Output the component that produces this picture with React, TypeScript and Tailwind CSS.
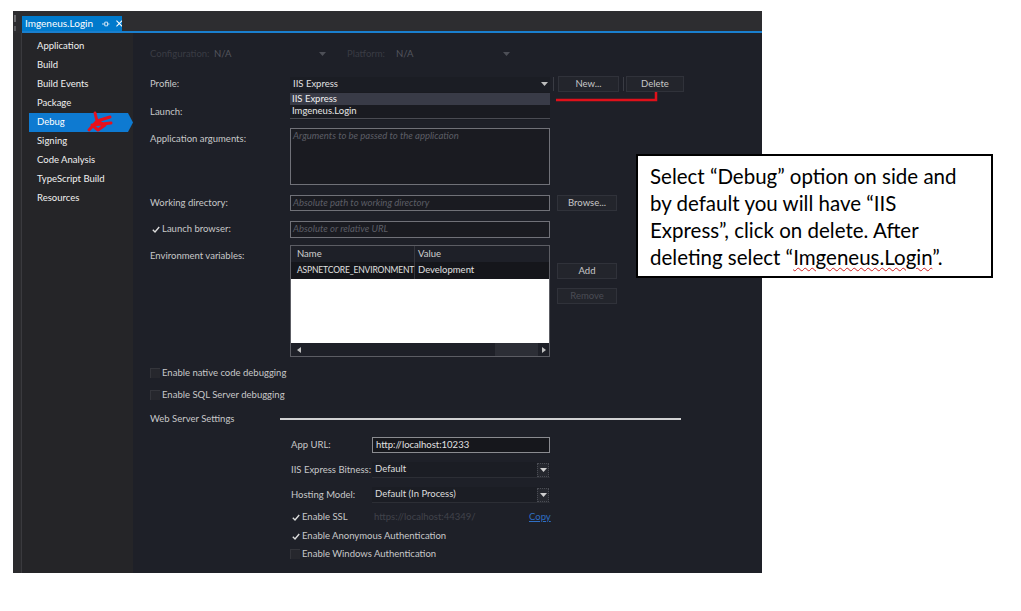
import React from "react";

const Arrow = ({ c = "#c8c8c8" }: { c?: string }) => (
  <svg width="7" height="4" viewBox="0 0 7 4">
    <path d="M0 0h7L3.5 4z" fill={c} />
  </svg>
);

const Check = () => (
  <svg width="8" height="7" viewBox="0 0 8 7">
    <path d="M0.8 3.8 3 5.9 7.2 1" stroke="#dcdcdc" strokeWidth="1.4" fill="none" />
  </svg>
);

const Box = () => <div className="w-[10px] h-[10px] bg-[#26272d] border-l border-t border-[#34353b]" />;

const SideItem = ({ label, selected }: { label: string; selected?: boolean }) =>
  selected ? (
    <div className="flex h-[19px] items-center ml-[7px]">
      <div className="w-[99px] h-[19px] bg-[#0e7ad1] flex items-center pl-[8px] text-white">{label}</div>
      <svg width="5" height="19" viewBox="0 0 5 19">
        <path d="M0 0L5 9.5L0 19z" fill="#0e7ad1" />
      </svg>
    </div>
  ) : (
    <div className="h-[19px] flex items-center pl-[15px] text-[#f1f1f1]">{label}</div>
  );

const Input = ({ text, placeholder, w = "w-[260px]", h = "h-[16px]" }: { text?: string; placeholder?: string; w?: string; h?: string }) => (
  <div className={`${w} ${h} bg-[#1a1b21] border border-[#707178] flex items-start pl-[2px] pt-[1px]`}>
    {text ? (
      <span className="text-[#e2e2e2] leading-[12px]">{text}</span>
    ) : (
      <span className="text-[#5c5e66] italic leading-[12px]">{placeholder}</span>
    )}
  </div>
);

const Btn = ({ label, dim, w = "w-[60px]" }: { label: string; dim?: boolean; w?: string }) => (
  <div className={`${w} h-[16px] bg-[#23252c] border border-[#30323a] flex items-center justify-center ${dim ? "text-[#4a4c54]" : "text-[#c8c8c8]"}`}>
    {label}
  </div>
);

const Combo = ({ text }: { text: string }) => (
  <div className="w-[178px] h-[16px] bg-[#1b1d24] border-b border-[#2c2e35] flex items-center justify-between pl-[3px] pr-[1px]">
    <span className="text-[#dedede]">{text}</span>
    <div className="w-[12px] h-[14px] border border-dotted border-[#4a4c54] bg-[#25272e] flex items-center justify-center">
      <Arrow c="#d0d0d0" />
    </div>
  </div>
);

export default function App() {
  return (
    <div className="w-[1021px] h-[611px] bg-white relative overflow-hidden pt-[11px] pl-[13px] font-['Lato',sans-serif] text-[9.5px]">
      <div className="w-[749px] h-[562px] flex flex-col bg-[#2d2d30]">
        {/* tab strip */}
        <div className="h-[20px] flex shrink-0">
          <div className="w-[9px] relative">
            <div className="absolute left-[1px] top-[4px] w-[2px] h-[7px] bg-[#6a6a6e]" />
            <div className="absolute left-[1px] top-[15px] w-[2px] h-[5px] bg-[#5a5a5e]" />
          </div>
          <div className="mt-[5px] w-[100px] h-[15px] bg-[#007acc] flex items-center pl-[3px] text-white text-[10px]">
            <span>Imgeneus.Login</span>
            <svg className="ml-[9px]" width="8" height="6" viewBox="0 0 8 6">
              <path d="M0 3h3M3 1h3v4H3zM6 3h2" stroke="#dbeaf7" strokeWidth="1" fill="none" />
            </svg>
            <svg className="ml-[6px]" width="7" height="7" viewBox="0 0 7 7">
              <path d="M0.5 0.5l6 6M6.5 0.5l-6 6" stroke="#fff" strokeWidth="1.1" />
            </svg>
          </div>
        </div>
        <div className="h-[2px] ml-[9px] bg-[#1a7fce] shrink-0" />
        {/* body */}
        <div className="flex-1 flex">
          <div className="w-[9px] bg-[#2b2b2e] border-r border-[#3a3a3e]" />
          {/* sidebar */}
          <div className="w-[111px] bg-[#252528] pt-[4px] flex flex-col">
            <SideItem label="Application" />
            <SideItem label="Build" />
            <SideItem label="Build Events" />
            <SideItem label="Package" />
            <SideItem label="Debug" selected />
            <SideItem label="Signing" />
            <SideItem label="Code Analysis" />
            <SideItem label="TypeScript Build" />
            <SideItem label="Resources" />
          </div>
          {/* main */}
          <div className="flex-1 bg-[#1e2028] pl-[17px] flex flex-col text-[#c8c8c8]">
            {/* config row */}
            <div className="flex items-center h-[16px] mt-[13px]">
              <div className="w-[64px] text-[#3a3c44]">Configuration:</div>
              <div className="w-[112px] flex items-center justify-between text-[#53555d]">
                <span>N/A</span>
                <Arrow c="#4d4f57" />
              </div>
              <div className="ml-[21px] w-[49px] text-[#3a3c44]">Platform:</div>
              <div className="w-[114px] flex items-center justify-between text-[#53555d]">
                <span>N/A</span>
                <Arrow c="#4d4f57" />
              </div>
            </div>
            {/* profile */}
            <div className="flex items-center h-[16px] mt-[14px]">
              <div className="w-[140px]">Profile:</div>
              <div className="w-[260px] h-[15px] bg-[#1b1d24] flex items-center justify-between pl-[3px] pr-[2px] relative">
                <span className="text-[#e0e0e0]">IIS Express</span>
                <Arrow c="#bdbdbd" />
                <div className="absolute left-0 top-[15px] w-[260px] h-[27px] bg-[#1a1b21] border-b border-[#4a4b52] z-10 flex flex-col pt-[1px]">
                  <div className="h-[12px] bg-[#393b47] flex items-center pl-[2px] pt-[1px] text-[#f0f0f0]">IIS Express</div>
                  <div className="h-[12px] flex items-center pl-[2px] pt-[1px] text-[#e6e6e6]">Imgeneus.Login</div>
                </div>
              </div>
              <div className="ml-[3px] w-px h-[14px] bg-[#3a3c44]" />
              <div className="ml-[4px]"><Btn label="New..." w="w-[61px]" /></div>
              <div className="ml-[4px] w-px h-[14px] bg-[#3a3c44]" />
              <div className="ml-[2px]"><Btn label="Delete" w="w-[58px]" /></div>
            </div>
            {/* launch */}
            <div className="flex items-center h-[16px] mt-[12px]">
              <div className="w-[140px]">Launch:</div>
              <div className="w-[260px] h-[15px] bg-[#1b1d24]" />
            </div>
            {/* app args */}
            <div className="flex items-start h-[57px] mt-[8px]">
              <div className="w-[140px] pt-[4px]">Application arguments:</div>
              <Input placeholder="Arguments to be passed to the application" h="h-[57px]" />
            </div>
            {/* working dir */}
            <div className="flex items-center h-[16px] mt-[10px]">
              <div className="w-[140px]">Working directory:</div>
              <Input placeholder="Absolute path to working directory" />
              <div className="ml-[7px]"><Btn label="Browse..." /></div>
            </div>
            {/* launch browser */}
            <div className="flex items-center h-[17px] mt-[10px]">
              <div className="w-[140px] flex items-center pl-[2px]">
                <Check />
                <span className="ml-[2px]">Launch browser:</span>
              </div>
              <Input placeholder="Absolute or relative URL" h="h-[17px]" />
            </div>
            {/* env vars */}
            <div className="flex items-start h-[112px] mt-[7px]">
              <div className="w-[140px] pt-[4px]">Environment variables:</div>
              <div className="w-[260px] h-[112px] border border-[#5c5d64] flex flex-col bg-white">
                <div className="h-[16px] bg-[#1e2028] flex items-center">
                  <div className="w-[124px] pl-[6px] text-[#d0d0d0] h-full flex items-center border-r border-[#34363e]">Name</div>
                  <div className="pl-[3px] text-[#d0d0d0]">Value</div>
                </div>
                <div className="h-[17px] bg-[#15161b] flex items-center">
                  <div className="w-[124px] pl-[6px] text-[#e0e0e0] h-full flex items-center border-r border-[#34363e] whitespace-nowrap text-[8.5px] tracking-[-0.15px]">ASPNETCORE_ENVIRONMENT</div>
                  <div className="pl-[3px] text-[#e0e0e0]">Development</div>
                </div>
                <div className="flex-1 bg-white" />
                <div className="h-[13px] bg-[#1e2028] flex items-center pl-[6px] pr-[3px]">
                  <svg width="4" height="6" viewBox="0 0 4 6"><path d="M4 0v6L0 3z" fill="#c0c0c0" /></svg>
                  <div className="flex-1" />
                  <div className="w-[43px] h-[13px] bg-[#2c2e36]" />
                  <svg className="ml-[4px]" width="4" height="6" viewBox="0 0 4 6"><path d="M0 0v6L4 3z" fill="#c0c0c0" /></svg>
                </div>
              </div>
              <div className="ml-[7px] pt-[18px] flex flex-col gap-[9px]">
                <Btn label="Add" />
                <Btn label="Remove" dim />
              </div>
            </div>
            {/* native */}
            <div className="flex items-center h-[16px] mt-[8px]">
              <Box />
              <span className="ml-[2px]">Enable native code debugging</span>
            </div>
            <div className="flex items-center h-[16px] mt-[6px]">
              <Box />
              <span className="ml-[2px]">Enable SQL Server debugging</span>
            </div>
            {/* web server */}
            <div className="flex items-center h-[16px] mt-[8px]">
              <div className="w-[130px]">Web Server Settings</div>
              <div className="w-[401px] h-[2px] bg-[#d2d2d4]" />
            </div>
            <div className="flex items-center h-[16px] mt-[10px] ml-[141px]">
              <div className="w-[81px]">App URL:</div>
              <div className="w-[178px] h-[16px] bg-[#16171c] border border-[#8a8b90] flex items-center pl-[3px] text-[#e2e2e2]">http://localhost:10233</div>
            </div>
            <div className="flex items-center h-[16px] mt-[9px] ml-[141px]">
              <div className="w-[81px]">IIS Express Bitness:</div>
              <Combo text="Default" />
            </div>
            <div className="flex items-center h-[16px] mt-[9px] ml-[141px]">
              <div className="w-[81px]">Hosting Model:</div>
              <Combo text="Default (In Process)" />
            </div>
            <div className="flex items-center h-[16px] mt-[6px] ml-[142px]">
              <div className="w-[82px] flex items-center">
                <Check />
                <span className="ml-[2px]">Enable SSL</span>
              </div>
              <div className="w-[155px] text-[#41434b]">https://localhost:44349/</div>
              <span className="text-[#2f6fc4] underline">Copy</span>
            </div>
            <div className="flex items-center h-[16px] mt-[3px] ml-[142px]">
              <Check />
              <span className="ml-[2px]">Enable Anonymous Authentication</span>
            </div>
            <div className="flex items-center h-[16px] mt-[2px] ml-[140px]">
              <Box />
              <span className="ml-[2px]">Enable Windows Authentication</span>
            </div>
          </div>
        </div>
      </div>

      {/* red annotations */}
      <svg className="absolute left-[552px] top-[88px]" width="110" height="16" viewBox="0 0 110 16">
        <path d="M4 12H104V4" stroke="#e0101a" strokeWidth="2.5" fill="none" />
      </svg>
      <svg className="absolute left-[86px] top-[111px]" width="28" height="22" viewBox="0 0 28 22">
        <path d="M3 19L11 10L9 2M11 10L24 6M11 10L19 14L12 19L6 14L25 12" stroke="#e8101c" strokeWidth="3" fill="none" strokeLinejoin="round" strokeLinecap="round" />
      </svg>

      {/* callout */}
      <div className="absolute left-[636px] top-[154px] w-[357px] h-[124px] bg-white border-2 border-black pl-[12px] pt-[7px] text-black text-[20.5px] leading-[27px] font-['Lato',sans-serif] whitespace-nowrap">
        <div>Select “Debug” option on side and</div>
        <div>by default you will have “IIS</div>
        <div>Express”, click on delete. After</div>
        <div>
          deleting select “<span className="underline decoration-wavy decoration-[#d02020] decoration-1 underline-offset-2">Imgeneus.Login</span>”.
        </div>
      </div>
    </div>
  );
}
